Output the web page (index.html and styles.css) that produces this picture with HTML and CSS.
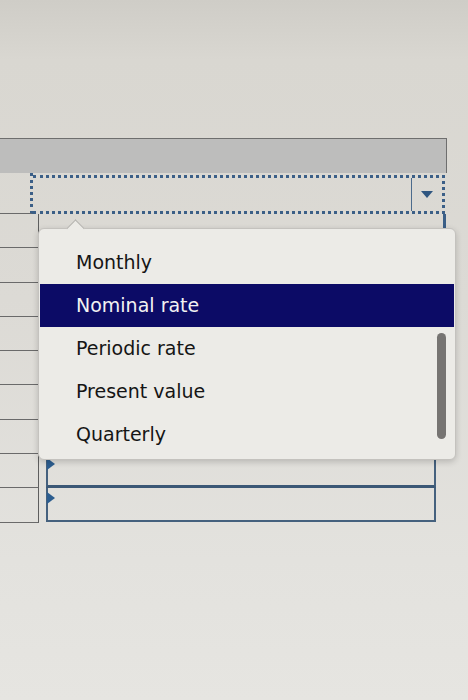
FILE: index.html
```html
<!DOCTYPE html>
<html lang="en">
<head>
    <meta charset="UTF-8">
    <meta name="viewport" content="width=device-width, initial-scale=1.0">
    <title>Dropdown</title>
    <link rel="stylesheet" href="styles.css">
</head>
<body>
    <div class="page">
        <div class="sheet">
            <div class="head"></div>
            <div class="select-row">
                <div class="key key-dotted"></div>
                <div class="select">
                    <div class="select-btn"><span class="arrow"></span></div>
                </div>
            </div>
            <div class="row"><div class="key"></div><div class="val val-edge"></div></div>
            <div class="row"><div class="key"></div><div class="val"></div></div>
            <div class="row"><div class="key"></div><div class="val"></div></div>
            <div class="row"><div class="key"></div><div class="val"></div></div>
            <div class="row"><div class="key"></div><div class="val"></div></div>
            <div class="row"><div class="key"></div><div class="val"></div></div>
            <div class="row"><div class="key"></div><div class="val"></div></div>
            <div class="row"><div class="key"></div><div class="val"><div class="box box-top"><span class="marker"></span></div></div></div>
            <div class="row"><div class="key"></div><div class="val"><div class="box box-bottom"><span class="marker"></span></div></div></div>
        </div>

        <div class="menu">
            <span class="notch"></span>
            <div class="item">Monthly</div>
            <div class="item selected">Nominal rate</div>
            <div class="item">Periodic rate</div>
            <div class="item">Present value</div>
            <div class="item">Quarterly</div>
            <span class="scroll"></span>
        </div>
    </div>
</body>
</html>
```

FILE: styles.css
```css
body {
    margin: 0;
    height: 700px;
    overflow: hidden;
    font-family: "DejaVu Sans", Verdana, sans-serif;
    background: linear-gradient(180deg, #cfcdc7 0px, #d9d7d1 60px, #dcdad5 300px, #e3e2de 560px, #e6e5e1 700px);
}
.page {
    position: relative;
    padding-top: 138px;
}
.sheet {
    width: 447px;
}
.head {
    height: 34px;
    background-color: #bdbdbc;
    border-top: 1px solid #6e6e6e;
    border-right: 1px solid #6e6e6e;
}
.select-row {
    display: flex;
    height: 41px;
}
.key {
    width: 38px;
    border-right: 1px solid #5e5e5e;
    border-bottom: 1px solid #6a6a6a;
}
.key-dotted {
    width: 30px;
    border-right: 3px dotted #3b5f87;
    border-bottom: 1px solid #6a6a6a;
}
.select {
    flex: 1;
    display: flex;
    justify-content: flex-end;
    margin-top: 2px;
    margin-right: 2px;
    border-top: 3px dotted #3b5f87;
    border-bottom: 3px dotted #3b5f87;
    border-right: 3px dotted #3b5f87;
}
.select-btn {
    width: 30px;
    border-left: 1px solid #4c6b8c;
    display: flex;
    align-items: center;
    justify-content: center;
}
.arrow {
    width: 0;
    height: 0;
    border-left: 6px solid transparent;
    border-right: 6px solid transparent;
    border-top: 7px solid #2f5680;
}
.row {
    display: flex;
    height: 34.3px;
}
.val {
    flex: 1;
}
.val-edge {
    height: 18px;
    border-right: 3px solid #3b5f87;
    margin-right: 1px;
}
.box {
    position: relative;
    margin-left: 7px;
    width: 386px;
    border-left: 2px solid #45617e;
    border-right: 2px solid #45617e;
}
.box-top {
    height: 31px;
    border-bottom: 3px solid #3b5876;
}
.box-bottom {
    height: 32px;
    border-bottom: 2px solid #45617e;
}
.marker {
    position: absolute;
    left: -1px;
    top: 4px;
    width: 0;
    height: 0;
    border-top: 6px solid transparent;
    border-bottom: 6px solid transparent;
    border-left: 8px solid #2c5d8f;
}
.menu {
    position: absolute;
    left: 38px;
    top: 228px;
    width: 418px;
    height: 232px;
    padding-top: 12px;
    box-sizing: border-box;
    background-color: #ecebe7;
    border: 1px solid #c4c2be;
    border-radius: 6px;
    box-shadow: 0 2px 6px rgba(0, 0, 0, 0.18);
}
.notch {
    position: absolute;
    left: 30px;
    top: -7px;
    width: 12px;
    height: 12px;
    background-color: #ecebe7;
    border-top: 1px solid #b3b1ad;
    border-left: 1px solid #b3b1ad;
    transform: rotate(45deg);
}
.item {
    height: 43px;
    line-height: 43px;
    padding-left: 37px;
    font-size: 19px;
    color: #151515;
}
.selected {
    margin: 0 1px;
    padding-left: 36px;
    background-color: #0c0b66;
    color: #f2f2f2;
}
.scroll {
    position: absolute;
    right: 9px;
    top: 104px;
    width: 9px;
    height: 106px;
    border-radius: 5px;
    background-color: #767472;
}
```
